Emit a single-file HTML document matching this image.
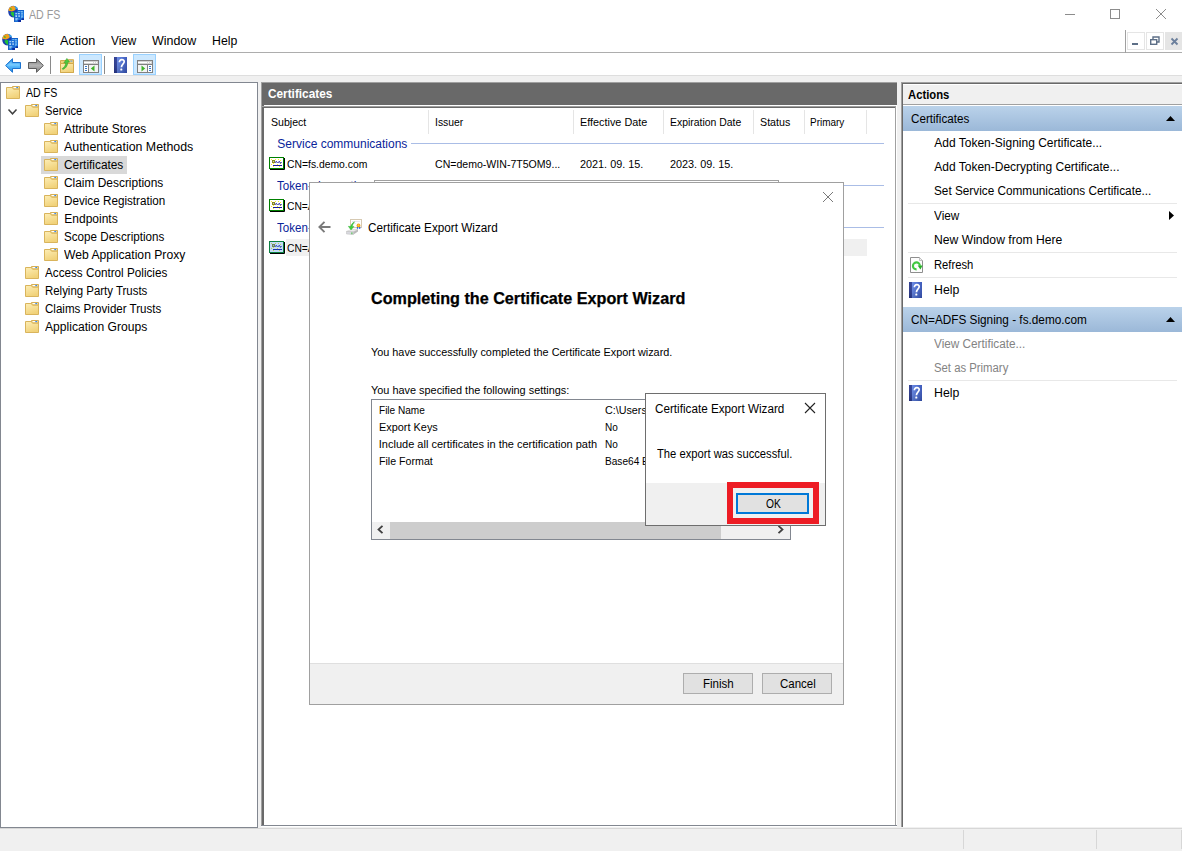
<!DOCTYPE html>
<html><head><meta charset="utf-8"><title>AD FS</title>
<style>
html,body{margin:0;padding:0;}
body{width:1182px;height:851px;overflow:hidden;position:relative;background:#f0f0f0;font-family:"Liberation Sans",sans-serif;font-size:12px;color:#000;}
div,span,svg{position:absolute;box-sizing:border-box;}
.t{white-space:pre;}
svg{overflow:visible;}
</style></head><body>
<svg width="0" height="0" style="left:0;top:0"><defs>
<linearGradient id="fg" x1="0" y1="0" x2="0.4" y2="1"><stop offset="0" stop-color="#fdeeb6"/><stop offset="1" stop-color="#f1d27a"/></linearGradient>
<linearGradient id="hb" x1="0" y1="0" x2="1" y2="0"><stop offset="0" stop-color="#27358a"/><stop offset="0.2" stop-color="#2c3e98"/><stop offset="0.22" stop-color="#6485e2"/><stop offset="0.6" stop-color="#4c6ed2"/><stop offset="1" stop-color="#3552b6"/></linearGradient>
<linearGradient id="hv" x1="0" y1="0" x2="0" y2="1"><stop offset="0" stop-color="#fff" stop-opacity="0.05"/><stop offset="1" stop-color="#000" stop-opacity="0.15"/></linearGradient>
<linearGradient id="ab" x1="0" y1="0" x2="0" y2="1"><stop offset="0" stop-color="#1f86e0"/><stop offset="0.5" stop-color="#5fc0ff"/><stop offset="1" stop-color="#1f86e0"/></linearGradient>
<linearGradient id="ag" x1="0" y1="0" x2="0" y2="1"><stop offset="0" stop-color="#7d7d7d"/><stop offset="0.5" stop-color="#b4b4b4"/><stop offset="1" stop-color="#7d7d7d"/></linearGradient>
</defs></svg>
<div style="left:0px;top:0px;width:1182px;height:30px;background:#fff;"></div><svg style="left:8px;top:5px" width="16" height="17" viewBox="0 0 16 17"><ellipse cx="5.2" cy="6.6" rx="5" ry="5.8" fill="#1a3fb0"/><path d="M0.4 5.5 C0.6 2.5 3 0.9 5.5 1 C7 1.2 8 2 8 3.5 C7.5 5.5 5.5 5.5 4 6.5 C2.5 6 1.5 6.5 0.4 5.5 Z" fill="#f2a01c"/><path d="M6 1 C8 0.8 9.6 2.2 10 4 L7.5 4.2 C7.6 2.8 7 1.8 6 1 Z" fill="#3aa0e8"/><path d="M1.8 3.8 C2.6 3 3.6 3.2 3.8 4.2 C3.4 5.2 2.4 5.2 1.8 3.8 Z" fill="#22c032"/><path d="M2.5 7.5 C4 6.5 6 7 7 8 L7 12 C5 12.2 3 10.5 2.5 7.5 Z" fill="#22c23a"/><rect x="9.3" y="5" width="6.7" height="10" fill="#1a74da"/><rect x="9.3" y="5" width="6.7" height="0.8" fill="#0f5cc4"/><g fill="#a8dcff"><rect x="10.4" y="6.3" width="1.4" height="1"/><rect x="12.6" y="6.3" width="2.2" height="1"/><rect x="13.2" y="8.3" width="1.6" height="1.2"/><rect x="13.2" y="10.5" width="1.6" height="1.2"/><rect x="13.2" y="12.4" width="1.2" height="0.8"/></g><rect x="13.6" y="13.3" width="2.4" height="1.7" fill="#0a2fa0"/><rect x="6.2" y="7" width="6.8" height="10" fill="#1b6fd6"/><rect x="6.2" y="7" width="0.8" height="10" fill="#0f56bc"/><g fill="#d6f0ff"><rect x="7.4" y="8.2" width="1.5" height="1"/><rect x="9.8" y="8.2" width="2" height="1"/><rect x="7.4" y="10.4" width="1.6" height="1.4"/><rect x="10.4" y="10.4" width="1.4" height="1.4"/><rect x="7.6" y="13" width="1" height="2.4"/><rect x="9.2" y="13.4" width="1" height="1"/></g><rect x="10.2" y="15" width="2.8" height="2" fill="#0a2aa0"/></svg><span class="t" style="left:29.3px;top:7px;font-size:12px;line-height:17px;color:#999;transform-origin:0 0;transform:scaleX(0.8856);">AD FS</span><div style="left:1065px;top:14px;width:10px;height:1px;background:#8c8c8c;"></div><div style="left:1110px;top:9px;width:10px;height:10px;border:1px solid #8c8c8c;"></div><svg style="left:1156px;top:9px" width="10" height="10"><path d="M0 0 L10 10 M10 0 L0 10" stroke="#8c8c8c" stroke-width="1" fill="none"/></svg>
<div style="left:0px;top:30px;width:1182px;height:22px;background:#fff;"></div><div style="left:0px;top:52px;width:1182px;height:1px;background:#adadad;"></div><svg style="left:2px;top:33px" width="16" height="17" viewBox="0 0 16 17"><ellipse cx="5.2" cy="6.6" rx="5" ry="5.8" fill="#1a3fb0"/><path d="M0.4 5.5 C0.6 2.5 3 0.9 5.5 1 C7 1.2 8 2 8 3.5 C7.5 5.5 5.5 5.5 4 6.5 C2.5 6 1.5 6.5 0.4 5.5 Z" fill="#f2a01c"/><path d="M6 1 C8 0.8 9.6 2.2 10 4 L7.5 4.2 C7.6 2.8 7 1.8 6 1 Z" fill="#3aa0e8"/><path d="M1.8 3.8 C2.6 3 3.6 3.2 3.8 4.2 C3.4 5.2 2.4 5.2 1.8 3.8 Z" fill="#22c032"/><path d="M2.5 7.5 C4 6.5 6 7 7 8 L7 12 C5 12.2 3 10.5 2.5 7.5 Z" fill="#22c23a"/><rect x="9.3" y="5" width="6.7" height="10" fill="#1a74da"/><rect x="9.3" y="5" width="6.7" height="0.8" fill="#0f5cc4"/><g fill="#a8dcff"><rect x="10.4" y="6.3" width="1.4" height="1"/><rect x="12.6" y="6.3" width="2.2" height="1"/><rect x="13.2" y="8.3" width="1.6" height="1.2"/><rect x="13.2" y="10.5" width="1.6" height="1.2"/><rect x="13.2" y="12.4" width="1.2" height="0.8"/></g><rect x="13.6" y="13.3" width="2.4" height="1.7" fill="#0a2fa0"/><rect x="6.2" y="7" width="6.8" height="10" fill="#1b6fd6"/><rect x="6.2" y="7" width="0.8" height="10" fill="#0f56bc"/><g fill="#d6f0ff"><rect x="7.4" y="8.2" width="1.5" height="1"/><rect x="9.8" y="8.2" width="2" height="1"/><rect x="7.4" y="10.4" width="1.6" height="1.4"/><rect x="10.4" y="10.4" width="1.4" height="1.4"/><rect x="7.6" y="13" width="1" height="2.4"/><rect x="9.2" y="13.4" width="1" height="1"/></g><rect x="10.2" y="15" width="2.8" height="2" fill="#0a2aa0"/></svg><span class="t" style="left:26.3px;top:33px;font-size:12px;line-height:17px;transform-origin:0 0;transform:scaleX(0.9460);">File</span><span class="t" style="left:60.3px;top:33px;font-size:12px;line-height:17px;transform-origin:0 0;transform:scaleX(1.0582);">Action</span><span class="t" style="left:111.3px;top:33px;font-size:12px;line-height:17px;transform-origin:0 0;transform:scaleX(0.9807);">View</span><span class="t" style="left:152.3px;top:33px;font-size:12px;line-height:17px;transform-origin:0 0;transform:scaleX(1.0378);">Window</span><span class="t" style="left:212.3px;top:33px;font-size:12px;line-height:17px;transform-origin:0 0;transform:scaleX(1.0248);">Help</span><div style="left:1125px;top:30px;width:1px;height:23px;background:#a0a0a0;"></div><div style="left:1127px;top:32px;width:18px;height:18px;background:#fff;border:1px solid #e5e5e5;"></div><div style="left:1146px;top:32px;width:18px;height:18px;background:#fff;border:1px solid #e5e5e5;"></div><div style="left:1165px;top:32px;width:17px;height:18px;background:#e5e5e5;"></div><div style="left:1132px;top:43px;width:6px;height:2px;background:#5d6f87;"></div><svg style="left:1150px;top:36px" width="10" height="10"><path d="M3 3 V1 H9 V6 H7" fill="none" stroke="#5d6f87" stroke-width="1.4"/><rect x="0.7" y="3.7" width="6" height="4.6" fill="#fff" stroke="#5d6f87" stroke-width="1.4"/></svg><svg style="left:1171px;top:38px" width="7" height="7"><path d="M0.5 0.5 L6.5 6.5 M6.5 0.5 L0.5 6.5" stroke="#6b7f9c" stroke-width="1.8" fill="none"/></svg>
<div style="left:0px;top:53px;width:1182px;height:22px;background:#fff;"></div><div style="left:0px;top:75px;width:1182px;height:1px;background:#dedede;"></div><svg style="left:5px;top:58px" width="16" height="15"><path d="M0.6 7.5 L7.5 0.7 V4.5 H15.5 V10.5 H7.5 V14.3 Z" fill="url(#ab)" stroke="#1b72cf" stroke-width="1"/><path d="M2.2 7.5 L6.6 3.2 V5.5 H14.5 V7.5 Z" fill="#8fd6ff" opacity="0.55"/></svg><svg style="left:28px;top:58px" width="16" height="15"><path d="M15.4 7.5 L8.5 0.7 V4.5 H0.5 V10.5 H8.5 V14.3 Z" fill="url(#ag)" stroke="#5c5c5c" stroke-width="1"/></svg><div style="left:50px;top:56px;width:1px;height:18px;background:#8a8a8a;"></div><svg style="left:60px;top:58px" width="15" height="15"><path d="M0.5 2.5 H7.3 L8.3 1.7 H13.5 V14.5 H0.5 Z" fill="#efcf78" stroke="#d2aa4e"/><rect x="10.4" y="2.6" width="2" height="1" fill="#5aa0ee"/><path d="M0.5 5.5 H13.5 V14.5 H0.5 Z" fill="url(#fg)" stroke="#d2aa4e"/><path d="M2.2 10.6 C4.3 9.6 5.6 7.6 5.7 4.6 L3.8 4.9 L6.9 0.4 L9.6 4.1 L7.8 4.3 C7.7 8 5.6 10.6 2.8 11.5 Z" fill="#4cc83c" stroke="#2f9a24" stroke-width="0.5"/></svg><div style="left:79px;top:54px;width:23px;height:21px;background:#cce8ff;border:1px solid #99d1ff;"></div><svg style="left:83px;top:60px" width="16" height="13"><rect x="0.5" y="0.5" width="15" height="12" fill="#f4f4f4" stroke="#808080"/><rect x="1" y="1" width="14" height="3" fill="#d4d4d4"/><path d="M1 2.5 H10" stroke="#fff"/><rect x="11" y="2" width="1" height="1" fill="#fff"/><rect x="13" y="2" width="1" height="1" fill="#fff"/><path d="M1 4.5 H15" stroke="#808080"/><rect x="1" y="5" width="4" height="7" fill="#fff"/><path d="M5.5 5 V12" stroke="#808080"/><path d="M2 6.5 h2 M2 8.5 h2 M2 10.5 h2" stroke="#3c78c8"/><path d="M11.5 5.5 V11.5 L7.8 8.5 Z" fill="#3fb32a"/></svg><div style="left:104px;top:56px;width:1px;height:18px;background:#8a8a8a;"></div><svg style="left:114px;top:57px" width="13" height="16" viewBox="0 0 13 16"><rect x="0" y="0" width="13" height="16" fill="url(#hb)"/><rect x="0" y="0" width="13" height="16" fill="url(#hv)"/><path d="M5.4 5.3 C5.2 1.8 10.4 1.8 10.2 4.8 C10.1 6.8 7.6 7.4 7.4 10.2" fill="none" stroke="#fff" stroke-width="1.7"/><rect x="6.3" y="11.6" width="2" height="2" rx="0.6" fill="#fff"/></svg><div style="left:133px;top:54px;width:23px;height:21px;background:#cce8ff;border:1px solid #99d1ff;"></div><svg style="left:137px;top:60px" width="16" height="13"><rect x="0.5" y="0.5" width="15" height="12" fill="#f4f4f4" stroke="#808080"/><rect x="1" y="1" width="14" height="3" fill="#d4d4d4"/><path d="M1 2.5 H10" stroke="#fff"/><rect x="11" y="2" width="1" height="1" fill="#fff"/><rect x="13" y="2" width="1" height="1" fill="#fff"/><path d="M1 4.5 H15" stroke="#808080"/><rect x="11" y="5" width="4" height="7" fill="#fff"/><path d="M10.5 5 V12" stroke="#808080"/><path d="M12 6.5 h2 M12 8.5 h2 M12 10.5 h2" stroke="#3c78c8"/><path d="M4.5 5.5 V11.5 L8.2 8.5 Z" fill="#3fb32a"/></svg>
<div style="left:0px;top:82px;width:258px;height:746px;background:#fff;border:1px solid #828790;"></div><svg style="left:6px;top:86px" width="14" height="13" viewBox="0 0 14 13"><path d="M6.5 0.5 H13.5 V4 H6.5 Z" fill="#e9c76e" stroke="#d6af55"/><rect x="7.5" y="1" width="5" height="1.2" fill="#fff"/><rect x="10.3" y="1" width="1.8" height="1.2" fill="#3b8bea"/><path d="M0.5 1.5 H6.2 L7.6 3.2 H13.5 V12.5 H0.5 Z" fill="url(#fg)" stroke="#d9b45c"/></svg><span class="t" style="left:26.3px;top:85px;font-size:12px;line-height:17px;transform-origin:0 0;transform:scaleX(0.8856);">AD FS</span><svg style="left:25px;top:104px" width="14" height="13" viewBox="0 0 14 13"><path d="M6.5 0.5 H13.5 V4 H6.5 Z" fill="#e9c76e" stroke="#d6af55"/><rect x="7.5" y="1" width="5" height="1.2" fill="#fff"/><rect x="10.3" y="1" width="1.8" height="1.2" fill="#3b8bea"/><path d="M0.5 1.5 H6.2 L7.6 3.2 H13.5 V12.5 H0.5 Z" fill="url(#fg)" stroke="#d9b45c"/></svg><span class="t" style="left:45.3px;top:103px;font-size:12px;line-height:17px;transform-origin:0 0;transform:scaleX(0.9321);">Service</span><svg style="left:44px;top:122px" width="14" height="13" viewBox="0 0 14 13"><path d="M6.5 0.5 H13.5 V4 H6.5 Z" fill="#e9c76e" stroke="#d6af55"/><rect x="7.5" y="1" width="5" height="1.2" fill="#fff"/><rect x="10.3" y="1" width="1.8" height="1.2" fill="#3b8bea"/><path d="M0.5 1.5 H6.2 L7.6 3.2 H13.5 V12.5 H0.5 Z" fill="url(#fg)" stroke="#d9b45c"/></svg><span class="t" style="left:64.3px;top:121px;font-size:12px;line-height:17px;transform-origin:0 0;transform:scaleX(0.9949);">Attribute Stores</span><svg style="left:44px;top:140px" width="14" height="13" viewBox="0 0 14 13"><path d="M6.5 0.5 H13.5 V4 H6.5 Z" fill="#e9c76e" stroke="#d6af55"/><rect x="7.5" y="1" width="5" height="1.2" fill="#fff"/><rect x="10.3" y="1" width="1.8" height="1.2" fill="#3b8bea"/><path d="M0.5 1.5 H6.2 L7.6 3.2 H13.5 V12.5 H0.5 Z" fill="url(#fg)" stroke="#d9b45c"/></svg><span class="t" style="left:64.3px;top:139px;font-size:12px;line-height:17px;transform-origin:0 0;transform:scaleX(1.0309);">Authentication Methods</span><div style="left:41px;top:156px;width:86px;height:18px;background:#d9d9d9;"></div><svg style="left:44px;top:158px" width="14" height="13" viewBox="0 0 14 13"><path d="M6.5 0.5 H13.5 V4 H6.5 Z" fill="#e9c76e" stroke="#d6af55"/><rect x="7.5" y="1" width="5" height="1.2" fill="#fff"/><rect x="10.3" y="1" width="1.8" height="1.2" fill="#3b8bea"/><path d="M0.5 1.5 H6.2 L7.6 3.2 H13.5 V12.5 H0.5 Z" fill="url(#fg)" stroke="#d9b45c"/></svg><span class="t" style="left:64.3px;top:157px;font-size:12px;line-height:17px;transform-origin:0 0;transform:scaleX(0.9878);">Certificates</span><svg style="left:44px;top:176px" width="14" height="13" viewBox="0 0 14 13"><path d="M6.5 0.5 H13.5 V4 H6.5 Z" fill="#e9c76e" stroke="#d6af55"/><rect x="7.5" y="1" width="5" height="1.2" fill="#fff"/><rect x="10.3" y="1" width="1.8" height="1.2" fill="#3b8bea"/><path d="M0.5 1.5 H6.2 L7.6 3.2 H13.5 V12.5 H0.5 Z" fill="url(#fg)" stroke="#d9b45c"/></svg><span class="t" style="left:64.3px;top:175px;font-size:12px;line-height:17px;transform-origin:0 0;transform:scaleX(0.9927);">Claim Descriptions</span><svg style="left:44px;top:194px" width="14" height="13" viewBox="0 0 14 13"><path d="M6.5 0.5 H13.5 V4 H6.5 Z" fill="#e9c76e" stroke="#d6af55"/><rect x="7.5" y="1" width="5" height="1.2" fill="#fff"/><rect x="10.3" y="1" width="1.8" height="1.2" fill="#3b8bea"/><path d="M0.5 1.5 H6.2 L7.6 3.2 H13.5 V12.5 H0.5 Z" fill="url(#fg)" stroke="#d9b45c"/></svg><span class="t" style="left:64.3px;top:193px;font-size:12px;line-height:17px;transform-origin:0 0;transform:scaleX(0.9736);">Device Registration</span><svg style="left:44px;top:212px" width="14" height="13" viewBox="0 0 14 13"><path d="M6.5 0.5 H13.5 V4 H6.5 Z" fill="#e9c76e" stroke="#d6af55"/><rect x="7.5" y="1" width="5" height="1.2" fill="#fff"/><rect x="10.3" y="1" width="1.8" height="1.2" fill="#3b8bea"/><path d="M0.5 1.5 H6.2 L7.6 3.2 H13.5 V12.5 H0.5 Z" fill="url(#fg)" stroke="#d9b45c"/></svg><span class="t" style="left:64.3px;top:211px;font-size:12px;line-height:17px;">Endpoints</span><svg style="left:44px;top:230px" width="14" height="13" viewBox="0 0 14 13"><path d="M6.5 0.5 H13.5 V4 H6.5 Z" fill="#e9c76e" stroke="#d6af55"/><rect x="7.5" y="1" width="5" height="1.2" fill="#fff"/><rect x="10.3" y="1" width="1.8" height="1.2" fill="#3b8bea"/><path d="M0.5 1.5 H6.2 L7.6 3.2 H13.5 V12.5 H0.5 Z" fill="url(#fg)" stroke="#d9b45c"/></svg><span class="t" style="left:64.3px;top:229px;font-size:12px;line-height:17px;transform-origin:0 0;transform:scaleX(0.9701);">Scope Descriptions</span><svg style="left:44px;top:248px" width="14" height="13" viewBox="0 0 14 13"><path d="M6.5 0.5 H13.5 V4 H6.5 Z" fill="#e9c76e" stroke="#d6af55"/><rect x="7.5" y="1" width="5" height="1.2" fill="#fff"/><rect x="10.3" y="1" width="1.8" height="1.2" fill="#3b8bea"/><path d="M0.5 1.5 H6.2 L7.6 3.2 H13.5 V12.5 H0.5 Z" fill="url(#fg)" stroke="#d9b45c"/></svg><span class="t" style="left:64.3px;top:247px;font-size:12px;line-height:17px;transform-origin:0 0;transform:scaleX(1.0122);">Web Application Proxy</span><svg style="left:25px;top:266px" width="14" height="13" viewBox="0 0 14 13"><path d="M6.5 0.5 H13.5 V4 H6.5 Z" fill="#e9c76e" stroke="#d6af55"/><rect x="7.5" y="1" width="5" height="1.2" fill="#fff"/><rect x="10.3" y="1" width="1.8" height="1.2" fill="#3b8bea"/><path d="M0.5 1.5 H6.2 L7.6 3.2 H13.5 V12.5 H0.5 Z" fill="url(#fg)" stroke="#d9b45c"/></svg><span class="t" style="left:45.3px;top:265px;font-size:12px;line-height:17px;transform-origin:0 0;transform:scaleX(0.9754);">Access Control Policies</span><svg style="left:25px;top:284px" width="14" height="13" viewBox="0 0 14 13"><path d="M6.5 0.5 H13.5 V4 H6.5 Z" fill="#e9c76e" stroke="#d6af55"/><rect x="7.5" y="1" width="5" height="1.2" fill="#fff"/><rect x="10.3" y="1" width="1.8" height="1.2" fill="#3b8bea"/><path d="M0.5 1.5 H6.2 L7.6 3.2 H13.5 V12.5 H0.5 Z" fill="url(#fg)" stroke="#d9b45c"/></svg><span class="t" style="left:45.3px;top:283px;font-size:12px;line-height:17px;transform-origin:0 0;transform:scaleX(0.9527);">Relying Party Trusts</span><svg style="left:25px;top:302px" width="14" height="13" viewBox="0 0 14 13"><path d="M6.5 0.5 H13.5 V4 H6.5 Z" fill="#e9c76e" stroke="#d6af55"/><rect x="7.5" y="1" width="5" height="1.2" fill="#fff"/><rect x="10.3" y="1" width="1.8" height="1.2" fill="#3b8bea"/><path d="M0.5 1.5 H6.2 L7.6 3.2 H13.5 V12.5 H0.5 Z" fill="url(#fg)" stroke="#d9b45c"/></svg><span class="t" style="left:45.3px;top:301px;font-size:12px;line-height:17px;transform-origin:0 0;transform:scaleX(0.9635);">Claims Provider Trusts</span><svg style="left:25px;top:320px" width="14" height="13" viewBox="0 0 14 13"><path d="M6.5 0.5 H13.5 V4 H6.5 Z" fill="#e9c76e" stroke="#d6af55"/><rect x="7.5" y="1" width="5" height="1.2" fill="#fff"/><rect x="10.3" y="1" width="1.8" height="1.2" fill="#3b8bea"/><path d="M0.5 1.5 H6.2 L7.6 3.2 H13.5 V12.5 H0.5 Z" fill="url(#fg)" stroke="#d9b45c"/></svg><span class="t" style="left:45.3px;top:319px;font-size:12px;line-height:17px;transform-origin:0 0;transform:scaleX(1.0090);">Application Groups</span><svg style="left:8px;top:109px" width="9" height="6"><path d="M0.5 0.5 L4.5 4.8 L8.5 0.5" fill="none" stroke="#404040" stroke-width="1.5"/></svg>
<div style="left:261px;top:82px;width:636px;height:745px;background:#fff;"></div><div style="left:261px;top:82px;width:636px;height:1px;background:#a0a0a0;"></div><div style="left:261px;top:82px;width:1px;height:744px;background:#a0a0a0;"></div><div style="left:262px;top:83px;width:635px;height:22px;background:#696969;"></div><div style="left:262px;top:105px;width:2px;height:720px;background:#696969;"></div><div style="left:262px;top:106px;width:634px;height:1px;background:#a0a0a0;"></div><div style="left:262px;top:107px;width:634px;height:1px;background:#696969;"></div><div style="left:895px;top:106px;width:1px;height:720px;background:#a0a0a0;"></div><div style="left:261px;top:825px;width:636px;height:1px;background:#828790;"></div><span class="t" style="left:268.3px;top:86px;font-size:12px;line-height:17px;color:#fff;font-weight:700;transform-origin:0 0;transform:scaleX(0.9836);">Certificates</span><span class="t" style="left:271.3px;top:115px;font-size:11px;line-height:15px;transform-origin:0 0;transform:scaleX(0.9618);">Subject</span><span class="t" style="left:435.3px;top:115px;font-size:11px;line-height:15px;transform-origin:0 0;transform:scaleX(0.9443);">Issuer</span><span class="t" style="left:580.3px;top:115px;font-size:11px;line-height:15px;transform-origin:0 0;transform:scaleX(0.9856);">Effective Date</span><span class="t" style="left:670.3px;top:115px;font-size:11px;line-height:15px;transform-origin:0 0;transform:scaleX(0.9479);">Expiration Date</span><span class="t" style="left:760.3px;top:115px;font-size:11px;line-height:15px;transform-origin:0 0;transform:scaleX(0.9715);">Status</span><span class="t" style="left:810.3px;top:115px;font-size:11px;line-height:15px;transform-origin:0 0;transform:scaleX(0.9052);">Primary</span><div style="left:428px;top:110px;width:1px;height:24px;background:#e5e5e5;"></div><div style="left:573px;top:110px;width:1px;height:24px;background:#e5e5e5;"></div><div style="left:663px;top:110px;width:1px;height:24px;background:#e5e5e5;"></div><div style="left:753px;top:110px;width:1px;height:24px;background:#e5e5e5;"></div><div style="left:804px;top:110px;width:1px;height:24px;background:#e5e5e5;"></div><div style="left:866px;top:110px;width:1px;height:24px;background:#e5e5e5;"></div><span class="t" style="left:277.3px;top:136px;font-size:12px;line-height:17px;color:#0a249a;">Service communications</span><div style="left:411px;top:143px;width:473px;height:1px;background:#aabde6;"></div><svg style="left:269px;top:157px" width="16" height="13" viewBox="0 0 16 13"><path d="M15.5 1 V12.5 H1" fill="none" stroke="#000" stroke-width="1"/><rect x="0.5" y="0.5" width="14" height="11" fill="#fff" stroke="#008000"/><g fill="#ffee22"><rect x="2" y="2" width="1" height="1"/><rect x="6" y="2" width="1" height="1"/><rect x="9" y="2" width="1" height="1"/><rect x="11" y="3" width="1" height="1"/><rect x="2" y="7" width="1" height="1"/><rect x="4" y="6" width="1" height="1"/><rect x="8" y="7" width="1" height="1"/><rect x="4" y="9" width="1" height="1"/><rect x="10" y="9" width="1" height="1"/><rect x="11" y="6" width="1" height="1"/></g><rect x="3" y="3" width="3" height="3" fill="#8a8a20"/><rect x="4" y="4" width="1" height="1" fill="#c8c8c8"/><path d="M6 5.5 L7.5 4.5 L8.5 6 M9 5.5 L10.5 4.5 L11.5 6.3 L12.5 5" fill="none" stroke="#1a1a9a" stroke-width="1"/><rect x="4" y="8" width="9" height="1" fill="#1a1a9a"/></svg><span class="t" style="left:287.3px;top:157px;font-size:11px;line-height:15px;transform-origin:0 0;transform:scaleX(0.9416);">CN=fs.demo.com</span><span class="t" style="left:434.8px;top:157px;font-size:11px;line-height:15px;transform-origin:0 0;transform:scaleX(0.9602);">CN=demo-WIN-7T5OM9...</span><span class="t" style="left:580.3px;top:157px;font-size:11px;line-height:15px;transform-origin:0 0;transform:scaleX(0.9855);">2021. 09. 15.</span><span class="t" style="left:670.3px;top:157px;font-size:11px;line-height:15px;transform-origin:0 0;transform:scaleX(0.9855);">2023. 09. 15.</span><span class="t" style="left:277.3px;top:178px;font-size:12px;line-height:17px;color:#0a249a;transform-origin:0 0;transform:scaleX(0.9658);">Token-</span><span class="t" style="left:313.8px;top:178px;font-size:12px;line-height:17px;color:#0a249a;transform-origin:0 0;transform:scaleX(1.0077);">decrypting</span><div style="left:372px;top:185px;width:512px;height:1px;background:#aabde6;"></div><svg style="left:269px;top:199px" width="16" height="13" viewBox="0 0 16 13"><path d="M15.5 1 V12.5 H1" fill="none" stroke="#000" stroke-width="1"/><rect x="0.5" y="0.5" width="14" height="11" fill="#fff" stroke="#008000"/><g fill="#ffee22"><rect x="2" y="2" width="1" height="1"/><rect x="6" y="2" width="1" height="1"/><rect x="9" y="2" width="1" height="1"/><rect x="11" y="3" width="1" height="1"/><rect x="2" y="7" width="1" height="1"/><rect x="4" y="6" width="1" height="1"/><rect x="8" y="7" width="1" height="1"/><rect x="4" y="9" width="1" height="1"/><rect x="10" y="9" width="1" height="1"/><rect x="11" y="6" width="1" height="1"/></g><rect x="3" y="3" width="3" height="3" fill="#8a8a20"/><rect x="4" y="4" width="1" height="1" fill="#c8c8c8"/><path d="M6 5.5 L7.5 4.5 L8.5 6 M9 5.5 L10.5 4.5 L11.5 6.3 L12.5 5" fill="none" stroke="#1a1a9a" stroke-width="1"/><rect x="4" y="8" width="9" height="1" fill="#1a1a9a"/></svg><span class="t" style="left:287.3px;top:199px;font-size:11px;line-height:15px;transform-origin:0 0;transform:scaleX(0.9350);">CN=ADFS</span><span class="t" style="left:277.3px;top:220px;font-size:12px;line-height:17px;color:#0a249a;transform-origin:0 0;transform:scaleX(0.9658);">Token-</span><div style="left:354px;top:227px;width:530px;height:1px;background:#aabde6;"></div><div style="left:286px;top:239px;width:581px;height:17px;background:#f0f0f0;"></div><svg style="left:269px;top:241px" width="16" height="13" viewBox="0 0 16 13"><path d="M15.5 1 V12.5 H1" fill="none" stroke="#000" stroke-width="1"/><rect x="0.5" y="0.5" width="14" height="11" fill="#fff" stroke="#008000"/><g fill="#ffee22"><rect x="2" y="2" width="1" height="1"/><rect x="6" y="2" width="1" height="1"/><rect x="9" y="2" width="1" height="1"/><rect x="11" y="3" width="1" height="1"/><rect x="2" y="7" width="1" height="1"/><rect x="4" y="6" width="1" height="1"/><rect x="8" y="7" width="1" height="1"/><rect x="4" y="9" width="1" height="1"/><rect x="10" y="9" width="1" height="1"/><rect x="11" y="6" width="1" height="1"/></g><rect x="3" y="3" width="3" height="3" fill="#8a8a20"/><rect x="4" y="4" width="1" height="1" fill="#c8c8c8"/><path d="M6 5.5 L7.5 4.5 L8.5 6 M9 5.5 L10.5 4.5 L11.5 6.3 L12.5 5" fill="none" stroke="#1a1a9a" stroke-width="1"/><rect x="4" y="8" width="9" height="1" fill="#1a1a9a"/></svg><div style="left:269px;top:241px;width:15px;height:12px;background:rgba(40,130,230,0.28);"></div><span class="t" style="left:287.3px;top:241px;font-size:11px;line-height:15px;transform-origin:0 0;transform:scaleX(0.9350);">CN=ADFS</span><div style="left:374px;top:180px;width:405px;height:30px;background:#fff;border:1px solid #a0a0a0;"></div>
<div style="left:901px;top:82px;width:281px;height:745px;background:#fff;"></div><div style="left:901px;top:82px;width:281px;height:1px;background:#a0a0a0;"></div><div style="left:901px;top:82px;width:1px;height:745px;background:#a0a0a0;"></div><div style="left:902px;top:83px;width:280px;height:1px;background:#696969;"></div><div style="left:902px;top:83px;width:1px;height:744px;background:#696969;"></div><div style="left:903px;top:85px;width:279px;height:19px;background:#f0f0f0;"></div><div style="left:903px;top:104px;width:279px;height:1px;background:#a0a0a0;"></div><span class="t" style="left:908.3px;top:87px;font-size:12px;line-height:17px;font-weight:700;transform-origin:0 0;transform:scaleX(0.9383);">Actions</span><div style="left:903px;top:106px;width:279px;height:25px;background:linear-gradient(#bad2ea,#9bb8d8);"></div><span class="t" style="left:910.8px;top:111px;font-size:12px;line-height:17px;transform-origin:0 0;transform:scaleX(0.9712);">Certificates</span><svg style="left:1166px;top:116px" width="9" height="5"><path d="M0 5 L4.5 0 L9 5 Z" fill="#000"/></svg><span class="t" style="left:934.3px;top:135px;font-size:12px;line-height:17px;">Add Token-Signing Certificate...</span><span class="t" style="left:934.3px;top:159px;font-size:12px;line-height:17px;">Add Token-Decrypting Certificate...</span><span class="t" style="left:934.3px;top:183px;font-size:12px;line-height:17px;transform-origin:0 0;transform:scaleX(0.9814);">Set Service Communications Certificate...</span><div style="left:908px;top:203px;width:269px;height:1px;background:#e8e8e8;"></div><span class="t" style="left:934.3px;top:208px;font-size:12px;line-height:17px;transform-origin:0 0;transform:scaleX(0.9807);">View</span><svg style="left:1169px;top:211px" width="5" height="9"><path d="M0 0 L5 4.5 L0 9 Z" fill="#000"/></svg><span class="t" style="left:934.3px;top:232px;font-size:12px;line-height:17px;transform-origin:0 0;transform:scaleX(1.0126);">New Window from Here</span><div style="left:908px;top:252px;width:269px;height:1px;background:#e8e8e8;"></div><span class="t" style="left:934.3px;top:257px;font-size:12px;line-height:17px;transform-origin:0 0;transform:scaleX(0.9350);">Refresh</span><div style="left:908px;top:277px;width:269px;height:1px;background:#e8e8e8;"></div><span class="t" style="left:934.3px;top:282px;font-size:12px;line-height:17px;transform-origin:0 0;transform:scaleX(1.0248);">Help</span><svg style="left:909px;top:282px" width="13" height="16" viewBox="0 0 13 16"><rect x="0" y="0" width="13" height="16" fill="url(#hb)"/><rect x="0" y="0" width="13" height="16" fill="url(#hv)"/><path d="M5.4 5.3 C5.2 1.8 10.4 1.8 10.2 4.8 C10.1 6.8 7.6 7.4 7.4 10.2" fill="none" stroke="#fff" stroke-width="1.7"/><rect x="6.3" y="11.6" width="2" height="2" rx="0.6" fill="#fff"/></svg><svg style="left:910px;top:257px" width="13" height="16"><path d="M0.5 0.5 H9.5 L12.5 3.5 V15.5 H0.5 Z" fill="#fdfdfd" stroke="#8e8e8e"/><path d="M9.5 0.5 V3.5 H12.5" fill="#f0f0f0" stroke="#b5b5b5" stroke-width="0.8"/><path d="M6.6 12.4 A3.5 3.5 0 1 1 9.9 8.7" fill="none" stroke="#42c842" stroke-width="2.1"/><path d="M7.7 8.5 L12.7 8.5 L10.4 12.6 Z" fill="#2bb02b"/></svg><div style="left:903px;top:307px;width:279px;height:25px;background:linear-gradient(#bad2ea,#9bb8d8);"></div><span class="t" style="left:910.8px;top:312px;font-size:12px;line-height:17px;transform-origin:0 0;transform:scaleX(0.9818);">CN=ADFS Signing - fs.demo.com</span><svg style="left:1166px;top:317px" width="9" height="5"><path d="M0 5 L4.5 0 L9 5 Z" fill="#000"/></svg><span class="t" style="left:934.3px;top:336px;font-size:12px;line-height:17px;color:#838383;transform-origin:0 0;transform:scaleX(0.9801);">View Certificate...</span><span class="t" style="left:934.3px;top:360px;font-size:12px;line-height:17px;color:#838383;transform-origin:0 0;transform:scaleX(0.9442);">Set as Primary</span><div style="left:908px;top:380px;width:269px;height:1px;background:#e8e8e8;"></div><span class="t" style="left:934.3px;top:385px;font-size:12px;line-height:17px;transform-origin:0 0;transform:scaleX(1.0248);">Help</span><svg style="left:909px;top:385px" width="13" height="16" viewBox="0 0 13 16"><rect x="0" y="0" width="13" height="16" fill="url(#hb)"/><rect x="0" y="0" width="13" height="16" fill="url(#hv)"/><path d="M5.4 5.3 C5.2 1.8 10.4 1.8 10.2 4.8 C10.1 6.8 7.6 7.4 7.4 10.2" fill="none" stroke="#fff" stroke-width="1.7"/><rect x="6.3" y="11.6" width="2" height="2" rx="0.6" fill="#fff"/></svg>
<div style="left:0px;top:828px;width:1182px;height:1px;background:#d7d7d7;"></div><div style="left:963px;top:830px;width:1px;height:19px;background:#d7d7d7;"></div><div style="left:1096px;top:830px;width:1px;height:19px;background:#d7d7d7;"></div><div style="left:1181px;top:830px;width:1px;height:19px;background:#d7d7d7;"></div>
<div style="left:309px;top:182px;width:535px;height:523px;background:#fff;border:1px solid #a0a0a0;"></div><div style="left:310px;top:663px;width:533px;height:41px;background:#f0f0f0;border-top:1px solid #dfdfdf;"></div><svg style="left:318px;top:221px" width="13" height="12"><path d="M12.5 6 H1.8 M6.5 0.9 L1.4 6 L6.5 11.1" fill="none" stroke="#7a7a7a" stroke-width="1.9"/></svg><svg style="left:346px;top:219px" width="16" height="16"><rect x="4.5" y="0.5" width="11" height="8" fill="#fff" stroke="#d6c9b2"/><rect x="6" y="2" width="8" height="1" fill="#e6e8f2"/><rect x="6" y="4" width="4" height="1" fill="#ececf2"/><rect x="10.9" y="7.6" width="1.3" height="2.2" fill="#2a62e0"/><rect x="13" y="7.6" width="1.3" height="2.2" fill="#2a62e0"/><circle cx="12.5" cy="6.4" r="1.9" fill="#f0a818"/><circle cx="12.5" cy="6.2" r="0.7" fill="#f8cc60"/><path d="M0.5 12.4 L5.5 10.4 H12 L7.5 12.8 Z" fill="#ececec" stroke="#c4c4c4" stroke-width="0.5"/><path d="M0.5 12.4 L7.5 12.8 V15.6 L0.5 15 Z" fill="#d9d9df" stroke="#bdbdbd" stroke-width="0.5"/><path d="M7.5 12.8 L12 10.4 V12.6 L7.5 15.6 Z" fill="#b9b9b9"/><rect x="5.4" y="13.4" width="1" height="1.8" fill="#3fbf3f"/><path d="M8.6 2.8 C6.6 3.6 5.2 5.4 4.6 7.6 L2.3 7.3 L5 11 L8 7.4 L6.2 7.6 C6.6 5.8 7.4 4.2 8.6 2.8 Z" fill="#3ecf3e" stroke="#2ba82b" stroke-width="0.4"/></svg><span class="t" style="left:367.8px;top:220px;font-size:12px;line-height:17px;transform-origin:0 0;transform:scaleX(0.9781);">Certificate Export Wizard</span><svg style="left:823px;top:192px" width="10" height="10"><path d="M0 0 L10 10 M10 0 L0 10" stroke="#7a7a7a" stroke-width="1" fill="none"/></svg><span class="t" style="left:371.3px;top:288px;font-size:16px;line-height:22px;font-weight:700;transform-origin:0 0;transform:scaleX(1.0106);-webkit-text-stroke:0.25px #000;">Completing the Certificate Export Wizard</span><span class="t" style="left:371.3px;top:345px;font-size:11px;line-height:15px;transform-origin:0 0;transform:scaleX(0.9869);">You have successfully completed the Certificate Export wizard.</span><span class="t" style="left:371.3px;top:383px;font-size:11px;line-height:15px;transform-origin:0 0;transform:scaleX(0.9906);">You have specified the following settings:</span><div style="left:371px;top:399px;width:420px;height:141px;background:#fff;border:1px solid #828790;"></div><span class="t" style="left:378.8px;top:403px;font-size:11px;line-height:15px;transform-origin:0 0;transform:scaleX(0.9137);">File Name</span><span class="t" style="left:604.8px;top:403px;font-size:11px;line-height:15px;transform-origin:0 0;transform:scaleX(0.9771);">C:\Users</span><span class="t" style="left:378.8px;top:420px;font-size:11px;line-height:15px;transform-origin:0 0;transform:scaleX(0.9914);">Export Keys</span><span class="t" style="left:604.8px;top:420px;font-size:11px;line-height:15px;transform-origin:0 0;transform:scaleX(0.9102);">No</span><span class="t" style="left:378.8px;top:437px;font-size:11px;line-height:15px;">Include all certificates in the certification path</span><span class="t" style="left:604.8px;top:437px;font-size:11px;line-height:15px;transform-origin:0 0;transform:scaleX(0.9102);">No</span><span class="t" style="left:378.8px;top:454px;font-size:11px;line-height:15px;transform-origin:0 0;transform:scaleX(0.9672);">File Format</span><span class="t" style="left:604.8px;top:454px;font-size:11px;line-height:15px;transform-origin:0 0;transform:scaleX(0.9182);">Base64 E</span><div style="left:372px;top:522px;width:418px;height:17px;background:#f0f0f0;"></div><div style="left:390px;top:522px;width:331px;height:17px;background:#cdcdcd;"></div><svg style="left:377px;top:525px" width="7" height="9"><path d="M5.5 0.8 L1.5 4.5 L5.5 8.2" fill="none" stroke="#404040" stroke-width="1.8"/></svg><svg style="left:777px;top:525px" width="7" height="9"><path d="M1.5 0.8 L5.5 4.5 L1.5 8.2" fill="none" stroke="#404040" stroke-width="1.8"/></svg><div style="left:683px;top:673px;width:70px;height:21px;background:#e1e1e1;border:1px solid #adadad;"></div><div style="left:762px;top:673px;width:70px;height:21px;background:#e1e1e1;border:1px solid #adadad;"></div><span class="t" style="left:702.8px;top:676px;font-size:12px;line-height:17px;transform-origin:0 0;transform:scaleX(0.9620);">Finish</span><span class="t" style="left:779.8px;top:676px;font-size:12px;line-height:17px;transform-origin:0 0;transform:scaleX(0.9583);">Cancel</span>
<div style="left:645px;top:393px;width:181px;height:133px;background:#fff;border:1px solid #6e6e6e;"></div><div style="left:646px;top:483px;width:179px;height:42px;background:#f0f0f0;"></div><span class="t" style="left:654.8px;top:401px;font-size:12px;line-height:17px;transform-origin:0 0;transform:scaleX(0.9744);">Certificate Export Wizard</span><svg style="left:805px;top:403px" width="10" height="10"><path d="M0 0 L10 10 M10 0 L0 10" stroke="#222" stroke-width="1.1" fill="none"/></svg><span class="t" style="left:657.3px;top:446px;font-size:12px;line-height:17px;transform-origin:0 0;transform:scaleX(0.9348);">The export was successful.</span><div style="left:736px;top:493px;width:73px;height:21px;background:#e1e1e1;border:2px solid #0078d7;"></div><span class="t" style="left:765.8px;top:496px;font-size:12px;line-height:17px;transform-origin:0 0;transform:scaleX(0.8533);">OK</span><div style="left:727px;top:482px;width:92px;height:42px;border:6px solid #ed1c24;"></div>
</body></html>
